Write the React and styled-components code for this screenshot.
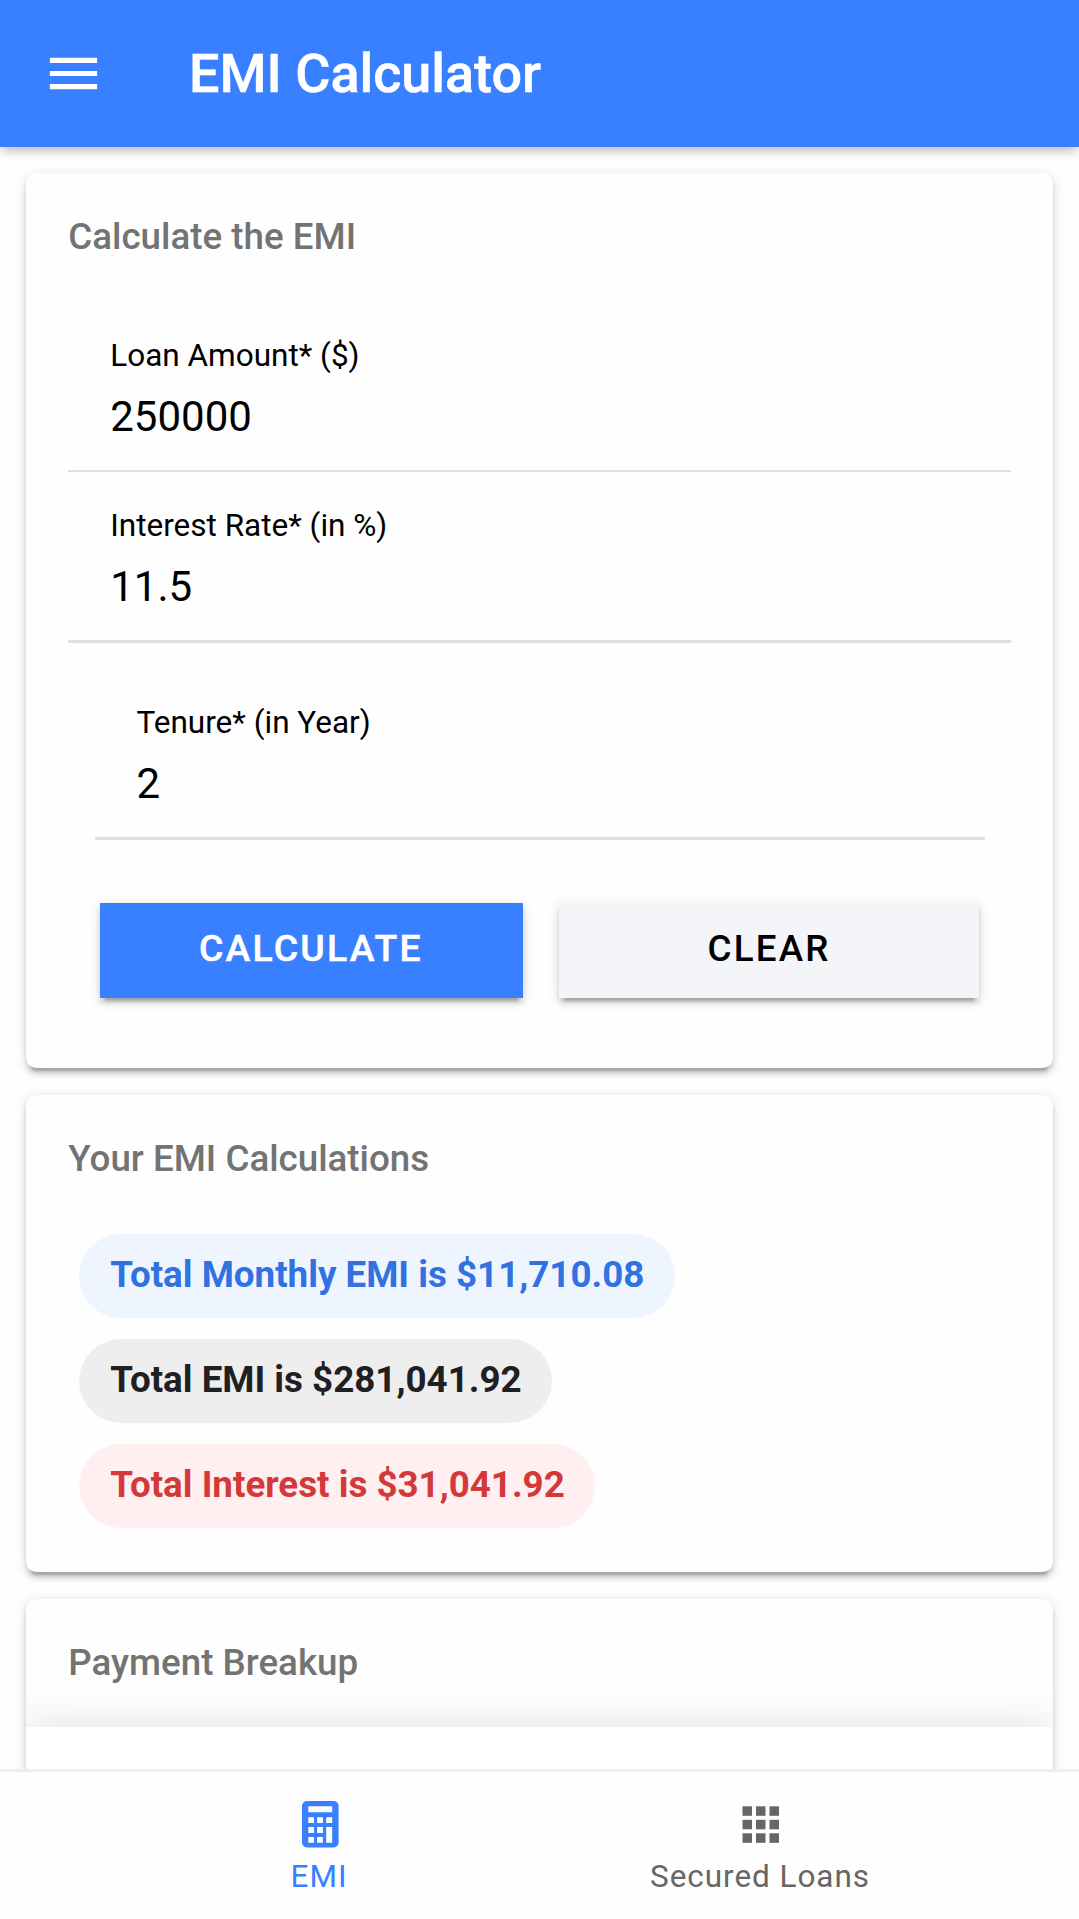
import React from "react";
import styled, { createGlobalStyle } from "styled-components";

const GlobalStyle = createGlobalStyle`
  *, *::before, *::after { box-sizing: border-box; }
  body {
    margin: 0;
    background: #fefefe;
    font-family: Roboto, "Noto Sans", sans-serif;
    color: #000;
  }
`;

const Screen = styled.div`
  display: flex;
  flex-direction: column;
  width: 1079px;
  height: 1919px;
  overflow: hidden;
`;

const Toolbar = styled.header`
  position: relative;
  z-index: 1;
  flex: none;
  display: flex;
  align-items: center;
  gap: 84px;
  height: 147px;
  padding: 0 42px;
  background: #3880ff;
  color: #fff;
  box-shadow: 0 5.25px 10.5px -2px rgba(0, 0, 0, 0.2),
    0 1px 13px rgba(0, 0, 0, 0.14);
`;

const MenuIcon = styled.svg`
  display: block;
  width: 63px;
  height: 63px;
  fill: currentColor;
`;

const Title = styled.h1`
  margin: 0;
  font-size: 53.9px;
  line-height: 63px;
  font-weight: 500;
  -webkit-text-stroke: 0.5px #fff;
  white-space: nowrap;
`;

const Content = styled.main`
  flex: 1;
  min-height: 0;
  overflow: hidden;
  display: flex;
  flex-direction: column;
  gap: 26.25px;
  padding: 26.25px 26.25px 0;
`;

const Card = styled.section`
  flex: none;
  display: flex;
  flex-direction: column;
  height: ${(p) => p.$height}px;
  border-radius: 10.5px;
  background: #fefefe;
  overflow: hidden;
  box-shadow: 0 7.9px 2.6px -5.25px rgba(0, 0, 0, 0.2),
    0 5.25px 5.25px 0 rgba(0, 0, 0, 0.14),
    0 2.6px 13.1px 0 rgba(0, 0, 0, 0.12);
`;

const CardTitle = styled.h2`
  margin: 0;
  padding: 42px 42px;
  font-size: 36.75px;
  line-height: 44px;
  font-weight: 500;
  color: #737373;
`;

const Fields = styled.div`
  display: flex;
  flex-direction: column;
  padding: 0.75px 42px 0;
`;

const Field = styled.div`
  display: flex;
  flex-direction: column;
  height: ${(p) => p.$height}px;
  margin: ${(p) => (p.$inset ? "27px 26.25px 0" : "0")};
  padding: ${(p) => (p.$inset ? 34 : 35)}px 42px 0;
  border-bottom: ${(p) => p.$rule}px solid #dfdfdf;
`;

const FieldLabel = styled.span`
  font-size: 31.5px;
  line-height: 38px;
`;

const FieldValue = styled.span`
  margin-top: 17px;
  font-size: 42px;
  line-height: 50px;
`;

const Actions = styled.div`
  display: flex;
  gap: 36px;
  padding: 62.7px 73.5px 0;
`;

const Button = styled.button`
  flex: ${(p) => (p.$primary ? "422.5" : "420.5")} 1 0;
  height: 95px;
  padding: ${(p) => (p.$primary ? "0 1px 5px 0" : "0 0 3px")};
  border: 0;
  font: 500 36.75px/44px Roboto, sans-serif;
  font-size: ${(p) => (p.$primary ? 37.35 : 36.75)}px;
  letter-spacing: 0.06em;
  text-transform: uppercase;
  background: ${(p) => (p.$primary ? "#3880ff" : "#f4f5f8")};
  color: ${(p) => (p.$primary ? "#fff" : "#000")};
  -webkit-text-stroke: ${(p) => (p.$primary ? "0.5px #fff" : "0")};
  box-shadow: 0 7.9px 2.6px -5.25px rgba(0, 0, 0, 0.2),
    0 5.25px 5.25px 0 rgba(0, 0, 0, 0.14),
    0 2.6px 13.1px 0 rgba(0, 0, 0, 0.12);
`;

const Chips = styled.div`
  display: flex;
  flex-direction: column;
  align-items: flex-start;
  gap: 21px;
  padding: 11px 52.5px 0;
`;

const Chip = styled.span`
  height: 84px;
  padding: 19px 30.5px 0 31.5px;
  border-radius: 42px;
  font-size: 36.75px;
  line-height: 44px;
  font-weight: 700;
  white-space: nowrap;
  background: ${(p) => p.$bg};
  color: ${(p) => p.$fg};
`;

const BreakupPanel = styled.div`
  flex: 1;
  background: #fff;
  box-shadow: 0 0 42px rgba(0, 0, 0, 0.13);
`;

const TabBar = styled.nav`
  position: relative;
  z-index: 1;
  flex: none;
  display: flex;
  justify-content: center;
  height: 150px;
  border-top: 3px solid #efefef;
  background: #fefefe;
`;

const Tab = styled.div`
  display: flex;
  flex-direction: column;
  align-items: center;
  width: 441px;
  padding-top: 23px;
  color: ${(p) => (p.$active ? "#3880ff" : "#666")};
`;

const TabIcon = styled.svg`
  display: block;
  width: 58px;
  height: 58px;
  margin-left: 2px;
  fill: currentColor;
`;

const TabLabel = styled.span`
  margin-top: 5px;
  font-size: 31.5px;
  line-height: 38px;
  letter-spacing: 0.03em;
`;

const fields = [
  { label: "Loan Amount* ($)", value: "250000", height: 170, rule: 2 },
  { label: "Interest Rate* (in %)", value: "11.5", height: 171, rule: 3 },
  { label: "Tenure* (in Year)", value: "2", height: 170, rule: 3, inset: true },
];

const results = [
  { text: "Total Monthly EMI is $11,710.08", bg: "#eef5ff", fg: "#3171e0" },
  { text: "Total EMI is $281,041.92", bg: "#eeeeee", fg: "#1e2023" },
  { text: "Total Interest is $31,041.92", bg: "#ffeff0", fg: "#d33939" },
];

const gridSteps = [10.5, 24, 37.5];

export default function App() {
  return (
    <Screen>
      <GlobalStyle />
      <Toolbar>
        <MenuIcon viewBox="0 0 512 512" aria-hidden="true">
          <path d="M64 384h384v-42.67H64V384zm0-106.67h384v-42.66H64v42.66zM64 128v42.67h384V128H64z" />
        </MenuIcon>
        <Title>EMI Calculator</Title>
      </Toolbar>
      <Content>
        <Card $height={895}>
          <CardTitle>Calculate the EMI</CardTitle>
          <Fields>
            {fields.map((f) => (
              <Field key={f.label} $inset={f.inset} $height={f.height} $rule={f.rule}>
                <FieldLabel>{f.label}</FieldLabel>
                <FieldValue>{f.value}</FieldValue>
              </Field>
            ))}
          </Fields>
          <Actions>
            <Button $primary>Calculate</Button>
            <Button>Clear</Button>
          </Actions>
        </Card>
        <Card $height={477.75}>
          <CardTitle>Your EMI Calculations</CardTitle>
          <Chips>
            {results.map((r) => (
              <Chip key={r.text} $bg={r.bg} $fg={r.fg}>
                {r.text}
              </Chip>
            ))}
          </Chips>
        </Card>
        <Card $height={400}>
          <CardTitle>Payment Breakup</CardTitle>
          <BreakupPanel />
        </Card>
      </Content>
      <TabBar>
        <Tab $active>
          <TabIcon viewBox="-0.5 -0.3 58 58" aria-hidden="true">
            <path
              fillRule="evenodd"
              d="M15.5 5.7h26.6a5 5 0 0 1 5 5v36.5a5 5 0 0 1-5 5H15.5a5 5 0 0 1-5-5V10.7a5 5 0 0 1 5-5zM16.8 11v6h23.9v-6zM16.8 22v5.8h5.7V22zM25.6 22v5.8h5.8V22zM34.7 22v5.8h6V22zM16.8 31.7v5.9h5.7v-5.9zM25.6 31.7v5.9h5.8v-5.9zM16.8 41.7v5.8h5.7v-5.8zM25.6 41.7v5.8h5.8v-5.8zM34.7 31.7v15.8h6V31.7z"
            />
          </TabIcon>
          <TabLabel>EMI</TabLabel>
        </Tab>
        <Tab>
          <TabIcon viewBox="0 -0.8 58 58" aria-hidden="true">
            {gridSteps.map((y) =>
              gridSteps.map((x) => (
                <rect key={`${x}-${y}`} x={x} y={y} width="9.5" height="9.5" />
              ))
            )}
          </TabIcon>
          <TabLabel>Secured Loans</TabLabel>
        </Tab>
      </TabBar>
    </Screen>
  );
}
